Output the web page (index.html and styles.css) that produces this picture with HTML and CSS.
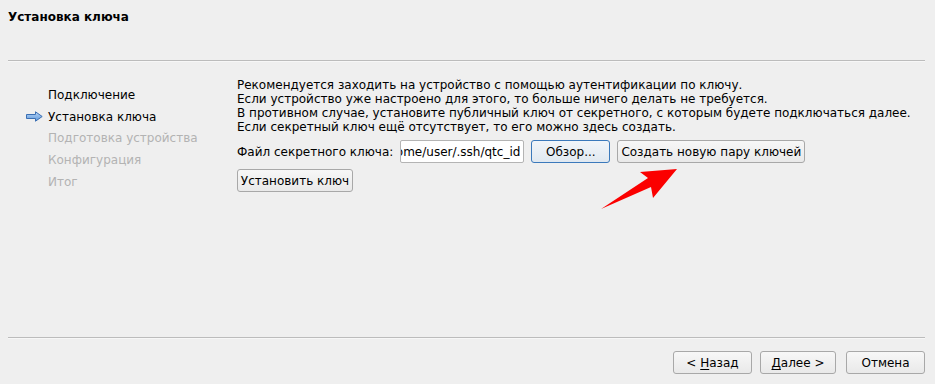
FILE: index.html
```html
<!DOCTYPE html>
<html lang="ru">
<head>
<meta charset="utf-8">
<title>Установка ключа</title>
<link rel="stylesheet" href="styles.css">
</head>
<body>
<div class="wizard">
  <div class="header">
    <div class="title">Установка ключа</div>
  </div>
  <div class="sep"></div>
  <div class="content">
    <ul class="steps">
      <li class="step"><span class="marker"></span><span>Подключение</span></li>
      <li class="step current"><span class="marker"><svg width="17" height="11" viewBox="0 0 17 11"><defs><linearGradient id="ag" x1="0" y1="0" x2="0" y2="1"><stop offset="0" stop-color="#b9d6f6"/><stop offset="1" stop-color="#5d97dc"/></linearGradient></defs><path d="M0.5 3.5 H9.5 V0.8 L16.2 5.5 L9.5 10.2 V7.5 H0.5 Z" fill="url(#ag)" stroke="#3b6fb3" stroke-width="1" stroke-linejoin="round"/></svg></span><span>Установка ключа</span></li>
      <li class="step disabled"><span class="marker"></span><span>Подготовка устройства</span></li>
      <li class="step disabled"><span class="marker"></span><span>Конфигурация</span></li>
      <li class="step disabled"><span class="marker"></span><span>Итог</span></li>
    </ul>
    <div class="page">
      <p class="intro">Рекомендуется заходить на устройство с помощью аутентификации по ключу.<br>Если устройство уже настроено для этого, то больше ничего делать не требуется.<br>В противном случае, установите публичный ключ от секретного, с которым будете подключаться далее.<br>Если секретный ключ ещё отсутствует, то его можно здесь создать.</p>
      <div class="row">
        <span class="label">Файл секретного ключа:</span>
        <div class="field"><span>/home/user/.ssh/qtc_id</span></div>
        <button class="btn focus w-browse">Обзор...</button>
        <button class="btn w-create">Создать новую пару ключей</button>
      </div>
      <div class="row">
        <button class="btn w-install">Установить ключ</button>
      </div>
    </div>
  </div>
  <div class="sep"></div>
  <div class="footer">
    <button class="btn w-back">&lt; <u>Н</u>азад</button>
    <button class="btn w-next"><u>Д</u>алее &gt;</button>
    <button class="btn w-cancel">Отмена</button>
  </div>
</div>
<svg class="annot" width="935" height="384" viewBox="0 0 935 384"><polygon points="601,209 648,178 640,172 677,169 653,198 651,187" fill="#fb0000"/></svg>
</body>
</html>
```

FILE: styles.css
```css
html, body {
  margin: 0;
  padding: 0;
  background: #efefef;
}
body {
  font-family: "DejaVu Sans", sans-serif;
  font-size: 12px;
  line-height: 14px;
  color: #000;
  width: 935px;
  height: 384px;
  position: relative;
  overflow: hidden;
}
.wizard {
  display: flex;
  flex-direction: column;
  height: 384px;
  padding: 0 10px 0 8px;
  box-sizing: border-box;
}
.header {
  height: 60px;
  box-sizing: border-box;
  padding-top: 10px;
}
.title {
  font-weight: bold;
}
.sep {
  height: 1px;
  background: #bcbcbc;
  border-bottom: 1px solid #f7f7f7;
}
.content {
  flex: 1;
  display: flex;
}
.steps {
  list-style: none;
  margin: 0;
  padding: 22px 0 0 18px;
  width: 211px;
}
.step {
  display: flex;
  align-items: center;
  height: 21.8px;
  gap: 5px;
}
.marker {
  width: 17px;
  height: 11px;
  display: flex;
}
.step.disabled {
  color: #b3b3b3;
}
.page {
  padding-top: 16px;
}
.intro {
  margin: 0 0 6px 0;
}
.row {
  display: flex;
  align-items: center;
  gap: 7px;
  margin-bottom: 6px;
}
.field {
  width: 124px;
  height: 23px;
  box-sizing: border-box;
  border: 1px solid #b4b4b4;
  border-radius: 2px;
  background: #fff;
  display: flex;
  align-items: center;
  justify-content: flex-end;
  overflow: hidden;
  padding-right: 3px;
  white-space: nowrap;
}
.btn {
  font-family: "DejaVu Sans", sans-serif;
  font-size: 12px;
  color: #000;
  height: 23px;
  box-sizing: border-box;
  border: 1px solid #a8a8a8;
  border-radius: 3px;
  background: linear-gradient(#f7f7f7, #e9e9e9);
  padding: 0;
  white-space: nowrap;
  text-align: center;
}
.btn.focus {
  border-color: #3b79bb;
  background: linear-gradient(#f1f5f9, #e0e8f0);
}
.btn u {
  text-decoration-thickness: 1px;
  text-underline-offset: 2px;
}
.w-browse { width: 79px; }
.w-create { width: 188px; }
.w-install { width: 116px; }
.footer {
  height: 45px;
  display: flex;
  justify-content: flex-end;
  align-items: flex-start;
  padding-top: 12px;
  box-sizing: border-box;
  gap: 8px;
}
.w-back { width: 79px; }
.w-next { width: 76px; margin-right: 2px; }
.w-cancel { width: 79px; }
.annot {
  position: absolute;
  left: 0;
  top: 0;
  pointer-events: none;
}
```
